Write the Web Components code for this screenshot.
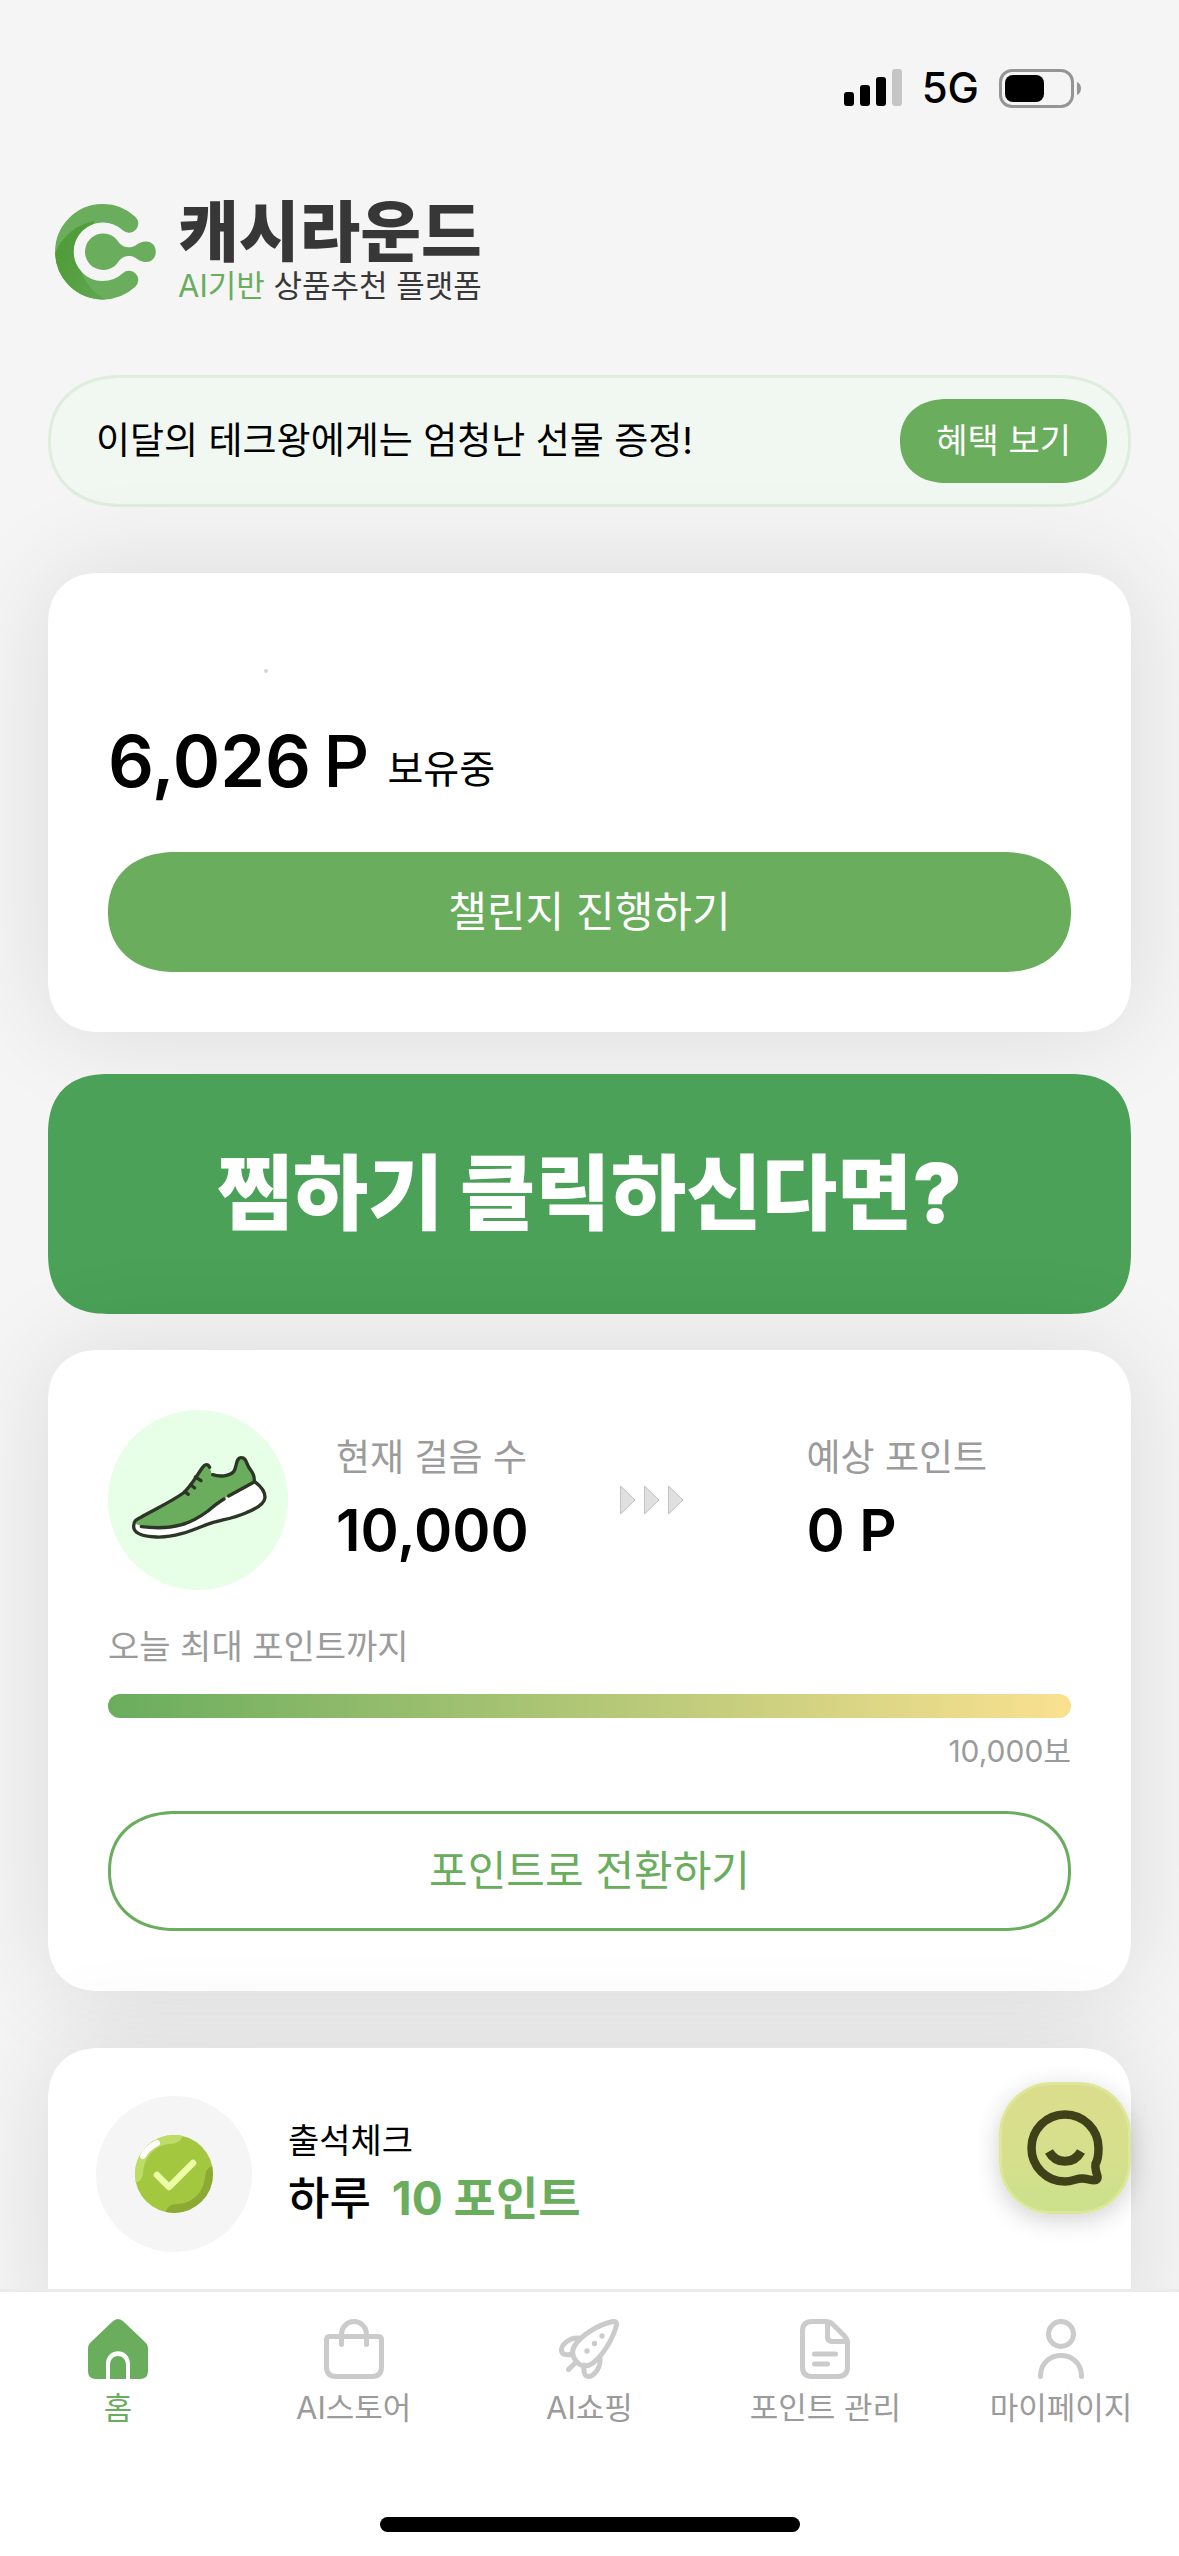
<!DOCTYPE html>
<html lang="ko">
<head>
<meta charset="utf-8">
<meta name="viewport" content="width=device-width, initial-scale=1">
<title>캐시라운드</title>
<style>
  :root {
    --green: #69ad5d;
    --green-deep: #4aa157;
    --ink: #000;
    --muted: #9b9b9b;
    --page: #f5f5f5;
  }
  html, body { height: 100%; }
  body {
    margin: 0;
    background: var(--page);
    color: var(--ink);
    font-family: Inter, "Noto Sans CJK KR", sans-serif;
  }
</style>
</head>
<body>
<cash-app></cash-app>

<script>
  const define = (name, html) => {
    const template = document.createElement('template');
    template.innerHTML = html;
    customElements.define(name, class extends HTMLElement {
      constructor() {
        super();
        this.attachShadow({ mode: 'open' }).append(template.content.cloneNode(true));
      }
    });
  };

  define('status-bar', `
    <style>
      :host { display: flex; align-items: center; justify-content: flex-end; gap: 20px; height: 176px; padding-right: 98px; }
      span { font-size: 42px; line-height: 48px; font-weight: 500; }
      svg { display: block; }
    </style>
    <svg width="58" height="38" viewBox="0 0 58 38" aria-hidden="true">
      <rect x="0" y="23" width="10" height="14" rx="3"/>
      <rect x="16" y="16" width="10" height="21" rx="3"/>
      <rect x="32" y="8" width="10" height="29" rx="3"/>
      <rect x="48" y="0" width="10" height="37" rx="3" fill="#c5c5c5"/>
    </svg>
    <span>5G</span>
    <svg width="82" height="39" viewBox="0 0 82 39" aria-hidden="true">
      <rect x="1.5" y="1.5" width="72" height="36" rx="11.5" fill="none" stroke="#959595" stroke-width="3"/>
      <rect x="6" y="6" width="39" height="27" rx="8"/>
      <path d="M78 13c2.600 1 4 3.500 4 6.500s-1.400 5.500-4 6.500z" fill="#959595"/>
    </svg>`);

  define('brand-logo', `
    <style>
      :host { display: flex; align-items: center; gap: 22px; padding: 24px 54px 0; }
      svg { display: block; flex: none; }
      h1, p { margin: 0; }
      h1 { font-size: 66px; line-height: 64px; font-weight: 900; color: #373737; }
      p { margin-top: 4px; font-size: 31px; line-height: 36px; color: #373737; }
      em { font-style: normal; color: var(--green); }
    </style>
    <svg width="102" height="96" viewBox="0 0 102 96" aria-hidden="true">
      <defs>
        <linearGradient id="fold" x1="0" y1="0" x2="1" y2="1">
          <stop offset="0" stop-color="#4b9a34"/><stop offset=".45" stop-color="#549f3f"/><stop offset="1" stop-color="#61a755"/>
        </linearGradient>
        <clipPath id="ring"><path d="M48.800 0a47.700 47.700 0 1 0 .01 95.500a47.700 47.700 0 1 0-.01-95.500zM48.800 18.500a29.250 29.250 0 1 1-.01 58.500a29.250 29.250 0 1 1 .01-58.500z" clip-rule="evenodd"/></clipPath>
      </defs>
      <path d="M75 19.500A38.500 38.500 0 1 0 75 76" fill="none" stroke="#69ad5d" stroke-width="18.500" stroke-linecap="round"/>
      <path d="M0 52C6 36 18 22 40 17L28 70C34 83 42 91 55 97L0 97z" fill="url(#fold)" clip-path="url(#ring)"/>
      <path d="M49.300 29.400C57 29.400 62 34 64.500 38C68 42.500 72 43.500 76 43.300C82 43 84 37.400 92 37.400C98 37.400 101.800 42 101.800 47.700S98 58 92 58C84 58 82 52.300 76 52C72 51.900 68 53 64.500 57.500C62 61.500 57 66 49.300 66A18.300 18.300 0 0 1 49.300 29.400z" fill="#69ad5d"/>
    </svg>
    <div>
      <h1>캐시라운드</h1>
      <p><em>AI기반</em> 상품추천 플랫폼</p>
    </div>`);

  define('notice-bar', `
    <style>
      :host {
        display: flex; align-items: center; justify-content: space-between; box-sizing: border-box;
        height: 132px; padding: 0 21px 0 45px; border: 3px solid #deeddd; border-radius: 66px; background: #f1f8f1;
      }
      p { margin: 0; font-size: 37px; line-height: 48px; }
      button {
        height: 84px; padding: 0 36px; border: 0; border-radius: 42px; background: var(--green); color: #fff;
        font: inherit; font-size: 34px; line-height: 48px;
      }
      @supports (corner-shape: squircle) {
        :host { corner-shape: superellipse(1.15); border-radius: 74px / 66px; }
        button { corner-shape: superellipse(1.15); border-radius: 47px / 42px; }
      }
    </style>
    <p><slot></slot></p>
    <button type="button"><slot name="action"></slot></button>`);

  define('panel-card', `
    <style>
      :host {
        display: block; box-sizing: border-box; padding: 60px; border-radius: 46px; background: #fff;
        box-shadow: 0 0 105px rgba(0, 0, 0, .11);
      }
      @supports (corner-shape: squircle) {
        :host { corner-shape: superellipse(1.2); border-radius: 52px; }
      }
    </style>
    <slot></slot>`);

  define('pill-button', `
    <style>
      :host { display: block; }
      button {
        display: block; box-sizing: border-box; width: 100%; height: 120px; padding: 0;
        border: 3px solid var(--green); border-radius: 60px; background: var(--green); color: #fff;
        font: inherit; font-size: 42px; line-height: 60px;
      }
      :host([outline]) button { background: #fff; color: var(--green); }
      @supports (corner-shape: squircle) {
        button { corner-shape: superellipse(1.15); border-radius: 68px / 60px; }
      }
    </style>
    <button type="button"><slot></slot></button>`);

  define('points-card', `
    <style>
      :host { display: block; }
      .owner { display: flex; align-items: center; height: 60px; padding: 15px 0 0 156px; box-sizing: border-box; }
      .owner i { width: 4px; height: 4px; border-radius: 2px; background: #d4d4d4; }
      p { display: flex; align-items: flex-end; margin: 24px 0 47px; line-height: 88px; }
      b, span { font-size: 72px; }
      b { font-weight: 600; }
      span { margin: 0 18px 0 12px; font-weight: 500; }
      small { font-size: 39px; line-height: 72px; }
    </style>
    <panel-card>
      <div class="owner"><i></i></div>
      <p><b>6,026</b><span>P</span><small>보유중</small></p>
      <pill-button>챌린지 진행하기</pill-button>
    </panel-card>`);

  define('promo-banner', `
    <style>
      :host { display: block; }
      a {
        display: flex; align-items: center; justify-content: center; height: 240px; border-radius: 54px;
        background: var(--green-deep); color: #fff; text-decoration: none;
        font-size: 82px; line-height: 96px; font-weight: 900;
      }
      @supports (corner-shape: squircle) {
        a { corner-shape: superellipse(1.3); border-radius: 62px; }
      }
    </style>
    <a href="#"><slot></slot></a>`);

  define('steps-card', `
    <style>
      :host { display: block; }
      .row { display: grid; grid-template-columns: 228px 29fr 19fr 27fr; align-items: center; }
      svg { display: block; }
      dl { margin: 0; display: flex; flex-direction: column; gap: 12px; }
      dt { font-size: 37px; line-height: 48px; color: var(--muted); }
      dd { margin: 0; font-size: 58px; line-height: 72px; font-weight: 600; }
      label { display: block; margin: 36px 0 26px; font-size: 34px; line-height: 42px; color: var(--muted); }
      progress {
        display: block; width: 100%; height: 24px; border: 0; border-radius: 12px; overflow: hidden;
        appearance: none; -webkit-appearance: none; background: #f0f0f0;
      }
      progress::-webkit-progress-bar { background: #f0f0f0; }
      progress::-webkit-progress-value { background: linear-gradient(90deg, #69ad5d, #fae190); }
      p { margin: 12px 0 39px; font-size: 30px; line-height: 42px; text-align: right; color: var(--muted); }
    </style>
    <panel-card>
      <div class="row">
        <svg width="180" height="180" viewBox="0 0 540 540" aria-hidden="true">
          <circle cx="270" cy="270" r="270" fill="#e7fee7"/>
          <path d="M78 340C90 346 100 350 105 350C180 358 240 352 310 295L345 268L440 216C455 228 470 245 470 264C468 290 430 305 400 316C360 328 320 332 290 346C240 368 190 382 145 380C110 377 80 370 78 355z" fill="#fff"/>
          <path d="M84 342C84 330 90 326 100 321C140 298 190 275 226 249C250 228 262 203 284 172C292 162 300 164 305 172L312 194C335 200 365 198 377 185C388 170 382 143 400 143C417 143 414 165 428 180C436 190 440 200 439 217L355 262L345 268C325 280 310 292 300 302C250 345 200 358 105 350z" fill="#69ad5d"/>
          <g fill="none" stroke="#2c3526" stroke-width="10" stroke-linecap="round" stroke-linejoin="round">
            <path d="M305 172C300 160 290 162 284 172C262 203 250 228 226 249C190 275 140 298 100 321C84 329 77 332 77 350C77 372 110 379 145 381C200 383 250 362 290 346C330 330 370 328 415 308C445 296 470 282 471 262C471 244 455 226 440 215L362 258"/>
            <path d="M314 194C335 201 365 199 377 185C388 170 382 143 400 143C417 143 414 165 428 180C436 190 440 200 439 215"/>
            <path d="M100 350C200 362 250 340 300 303C315 290 330 278 348 267"/>
            <path d="M262 201L279 212M248 224L260 234M231 245L241 253"/>
          </g>
        </svg>
        <dl><dt>현재 걸음 수</dt><dd>10,000</dd></dl>
        <svg width="64" height="30" viewBox="0 0 64 30" aria-hidden="true" fill="#e0e0e0" stroke="#c4c4c4">
          <path d="M.5 1L15 15L.5 29zM24.500 1L39 15L24.500 29zM48.500 1L63 15L48.500 29z"/>
        </svg>
        <dl><dt>예상 포인트</dt><dd>0 P</dd></dl>
      </div>
      <label for="steps">오늘 최대 포인트까지</label>
      <progress id="steps" value="10000" max="10000"></progress>
      <p>10,000보</p>
      <pill-button outline>포인트로 전환하기</pill-button>
    </panel-card>`);

  define('attendance-card', `
    <style>
      :host { display: block; }
      panel-card { padding: 48px 48px 96px; }
      div { display: flex; align-items: center; gap: 36px; }
      svg { display: block; flex: none; }
      h2, p { margin: 0; font-weight: 400; }
      h2 { font-size: 34px; line-height: 42px; }
      p { margin-top: 6px; font-size: 45px; line-height: 60px; font-weight: 500; }
      b { margin-left: 9px; font-size: 46px; font-weight: 700; color: var(--green); }
    </style>
    <panel-card>
      <div>
        <svg width="156" height="156" viewBox="0 0 156 156" aria-hidden="true">
          <defs><clipPath id="ball"><circle cx="78" cy="78" r="39"/></clipPath></defs>
          <circle cx="78" cy="78" r="78" fill="#f5f5f5"/>
          <circle cx="78" cy="78" r="39" fill="#a3c840"/>
          <g clip-path="url(#ball)">
            <path d="M36 87C43 87 46 84 47 77C48 60 60 49 74 48C82 48 86 44 87 38L36 36z" fill="#bedc68"/>
            <path d="M120 70C113 70 110 73 109 80C108 96 97 107 82 108C74 108 70 112 69 119L120 120z" fill="#8caa33"/>
          </g>
          <path d="M47 60Q51 52 61 47" fill="none" stroke="#fff" stroke-width="6" stroke-linecap="round"/>
          <path d="M61 79L73 91L97 67" fill="none" stroke="#edffa4" stroke-width="6.500" stroke-linecap="round" stroke-linejoin="round"/>
        </svg>
        <section><h2>출석체크</h2><p>하루 <b>10 포인트</b></p></section>
      </div>
    </panel-card>`);

  define('chat-button', `
    <style>
      :host { display: block; }
      button {
        display: grid; place-items: center; box-sizing: border-box; width: 132px; height: 132px; padding: 0;
        border: 3px solid rgba(225, 234, 160, .7); border-radius: 52px; background: linear-gradient(#dade8c 20%, #d5df8c 60%, #cae18b) border-box;
        box-shadow: 0 6px 24px rgba(0, 0, 0, .18);
      }
    </style>
    <button type="button" aria-label="채팅 상담">
      <svg width="76" height="76" viewBox="0 0 76 76" aria-hidden="true" fill="none" stroke="#3f4219" stroke-width="8.500">
        <path d="M68.500 54C71.500 49 71.500 43 71.500 38A33.500 33.500 0 1 0 38 71.500C46 71.500 50 68 56 68.500C61 69 66 71 69 70C72 68.500 70 65 69 61Q68 57 68.500 54z" stroke-linejoin="round"/>
        <path d="M22 41.500C29 54.500 47 54.500 54 41.500" stroke-width="9"/>
      </svg>
    </button>`);

  define('tab-item', `
    <style>
      :host { display: block; flex: 1; min-width: 0; --icon: #cbcbcb; color: #9b9b9b; }
      :host([active]) { --icon: var(--green); color: var(--green); }
      a { display: flex; flex-direction: column; align-items: center; gap: 11px; color: inherit; text-decoration: none; font-size: 31px; line-height: 36px; white-space: nowrap; }
    </style>
    <a href="#"><slot name="icon"></slot><span><slot></slot></span></a>`);

  define('tab-bar', `
    <style>
      :host { display: flex; flex-direction: column; box-sizing: border-box; height: 267px; padding: 27px 0 24px; border-top: 3px solid #ebebeb; background: #fff; }
      nav { display: flex; }
      svg { display: block; fill: none; stroke: var(--icon); stroke-width: 5; stroke-linecap: round; stroke-linejoin: round; }
      .home { align-self: center; width: 420px; height: 15px; margin-top: auto; border-radius: 8px; background: #000; }
    </style>
    <nav>
      <tab-item active>
        <svg slot="icon" width="60" height="60" viewBox="0 0 60 60" aria-hidden="true">
          <path d="M24 3Q30-3 36 3L58 24Q60 26 60 29V52Q60 60 52 60H42V45C42 28 18 28 18 45V60H8Q0 60 0 52V29Q0 26 2 24zM22 60V46C22 34 38 34 38 46V60z" fill="#69ad5d" stroke="none"/>
        </svg>홈</tab-item>
      <tab-item>
        <svg slot="icon" width="60" height="60" viewBox="0 0 60 60" aria-hidden="true">
          <path d="M5.500 17.500H54.500Q57.500 17.500 57.500 21V48Q57.500 57.500 48 57.500H12Q2.500 57.500 2.500 48V21Q2.500 17.500 5.500 17.500zM17.500 25.500V15A12.500 12.500 0 0 1 42.500 15V25.500"/>
        </svg>AI스토어</tab-item>
      <tab-item>
        <svg slot="icon" width="60" height="60" viewBox="0 0 60 60" aria-hidden="true">
          <path d="M54 2.500C38 6 23 16 16 26C12 32 13 37 17 42S27 49 34 44C44 36 54 20 57.500 6Q58 2 54 2.500zM20 19C10 18 3 26 2.500 30Q2 38 14 35M41 39C42 50 34 57 30 57.500Q24 58 25 46M15 45L9.500 50.500"/>
          <g fill="#cbcbcb" stroke="none"><circle cx="28" cy="32" r="2.700"/><circle cx="35.500" cy="24.500" r="2.700"/><circle cx="43" cy="17" r="2.700"/></g>
        </svg>AI쇼핑</tab-item>
      <tab-item>
        <svg slot="icon" width="50" height="60" viewBox="0 0 50 60" aria-hidden="true">
          <path d="M12 2.500H26Q30 2.500 33 5.500L44 16.500Q47.500 20 47.500 24V48Q47.500 57.500 38 57.500H12Q2.500 57.500 2.500 48V12Q2.500 2.500 12 2.500zM27.500 3.500V18Q27.500 22.500 32 22.500H47M14.500 35H35.500M14.500 45H27.500"/>
        </svg>포인트 관리</tab-item>
      <tab-item>
        <svg slot="icon" width="46" height="60" viewBox="0 0 46 60" aria-hidden="true">
          <circle cx="23" cy="15" r="12.500"/><path d="M2.500 57.500V56C4 30 42 30 43.500 56V57.500"/>
        </svg>마이페이지</tab-item>
    </nav>
    <div class="home"></div>`);

  define('cash-app', `
    <style>
      :host { display: flex; flex-direction: column; height: 100vh; }
      .view { position: relative; flex: 1; min-height: 0; overflow: hidden; }
      main { display: flex; flex-direction: column; padding: 71px 48px 0; }
      points-card { margin-top: 66px; }
      promo-banner { margin-top: 42px; }
      steps-card { margin-top: 36px; }
      attendance-card { margin-top: 57px; }
      chat-button { position: absolute; right: 48px; bottom: 75px; }
    </style>
    <div class="view">
      <status-bar></status-bar>
      <brand-logo></brand-logo>
      <main>
        <notice-bar>이달의 테크왕에게는 엄청난 선물 증정!<span slot="action">혜택 보기</span></notice-bar>
        <points-card></points-card>
        <promo-banner>찜하기 클릭하신다면?</promo-banner>
        <steps-card></steps-card>
        <attendance-card></attendance-card>
      </main>
      <chat-button></chat-button>
    </div>
    <tab-bar></tab-bar>`);
</script>
</body>
</html>
